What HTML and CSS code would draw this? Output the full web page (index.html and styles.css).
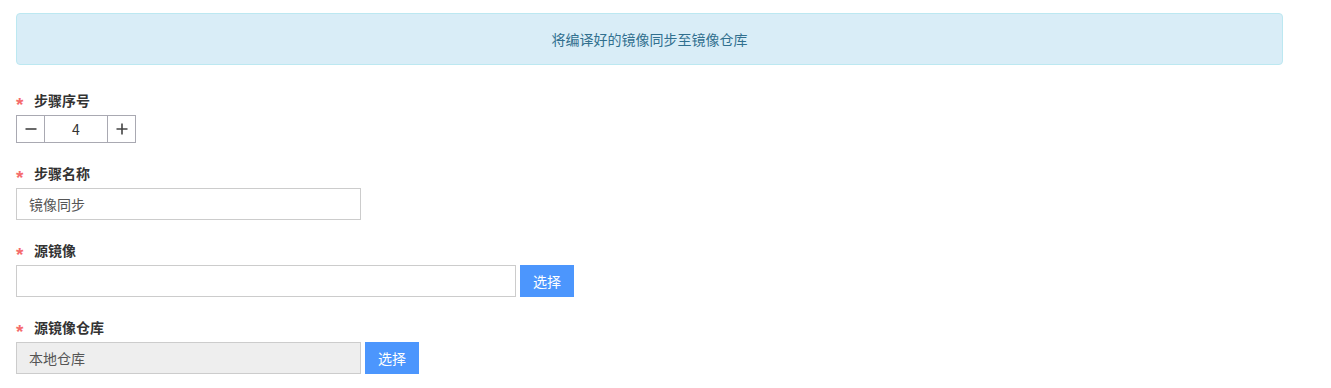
FILE: index.html
```html
<!DOCTYPE html>
<html lang="zh-CN">
<head>
    <meta charset="UTF-8">
    <meta name="viewport" content="width=device-width, initial-scale=1.0">
    <title>镜像同步</title>
    <link rel="stylesheet" href="styles.css">
</head>
<body>
    <div class="container">
        <div class="alert-info">将编译好的镜像同步至镜像仓库</div>

        <div class="form-item">
            <label class="form-label"><span class="required">*</span>步骤序号</label>
            <div class="number-input">
                <button class="num-btn" type="button">
                    <svg width="12" height="12" viewBox="0 0 12 12"><path d="M0.5 6h11" stroke="#444" stroke-width="1.6"/></svg>
                </button>
                <input class="num-value" type="text" value="4">
                <button class="num-btn" type="button">
                    <svg width="12" height="12" viewBox="0 0 12 12"><path d="M0.5 6h11M6 0.5v11" stroke="#444" stroke-width="1.6"/></svg>
                </button>
            </div>
        </div>

        <div class="form-item">
            <label class="form-label"><span class="required">*</span>步骤名称</label>
            <input class="text-input short" type="text" value="镜像同步">
        </div>

        <div class="form-item">
            <label class="form-label"><span class="required">*</span>源镜像</label>
            <div class="input-group">
                <input class="text-input long" type="text" value="">
                <button class="select-btn" type="button">选择</button>
            </div>
        </div>

        <div class="form-item">
            <label class="form-label"><span class="required">*</span>源镜像仓库</label>
            <div class="input-group">
                <input class="text-input short" type="text" value="本地仓库" disabled>
                <button class="select-btn" type="button">选择</button>
            </div>
        </div>
    </div>
</body>
</html>
```

FILE: styles.css
```css
* {
    margin: 0;
    padding: 0;
    box-sizing: border-box;
}

body {
    font-family: "Noto Sans CJK SC", "Noto Sans", sans-serif;
    font-size: 14px;
    color: #333;
    background: #fff;
}

.container {
    padding: 13px 48px 0 16px;
}

.alert-info {
    width: 1267px;
    height: 52px;
    background: #d9edf7;
    border: 1px solid #bce8f1;
    border-radius: 4px;
    color: #31708f;
    font-size: 14px;
    display: flex;
    align-items: center;
    justify-content: center;
    margin-bottom: 25px;
}

.form-item {
    margin-bottom: 20px;
}

.form-label {
    display: flex;
    align-items: center;
    height: 20px;
    line-height: 20px;
    margin-bottom: 5px;
    font-weight: bold;
    color: #333;
}

.required {
    color: #f56c6c;
    width: 18px;
    height: 20px;
    font-family: "Liberation Sans", sans-serif;
    font-size: 19px;
    line-height: 30px;
    font-weight: bold;
}

.number-input {
    display: flex;
    width: 120px;
    height: 28px;
    border: 1px solid #a9a9b2;
}

.num-btn {
    width: 27px;
    background: #fff;
    border: none;
    display: flex;
    align-items: center;
    justify-content: center;
}

.num-value {
    width: 64px;
    border: none;
    border-left: 1px solid #a9a9b2;
    border-right: 1px solid #a9a9b2;
    text-align: center;
    font-family: inherit;
    font-size: 14px;
    color: #333;
    outline: none;
}

.text-input {
    height: 32px;
    border: 1px solid #ccc;
    padding: 0 12px;
    font-family: inherit;
    font-size: 14px;
    color: #555;
    background: #fff;
    outline: none;
}

.text-input.short {
    width: 345px;
}

.text-input.long {
    width: 500px;
}

.text-input:disabled {
    background: #eee;
    color: #555;
}

.input-group {
    display: flex;
    gap: 4px;
}

.select-btn {
    width: 54px;
    height: 32px;
    background: #4c96fd;
    color: #fff;
    border: none;
    font-family: inherit;
    font-size: 14px;
}
```
